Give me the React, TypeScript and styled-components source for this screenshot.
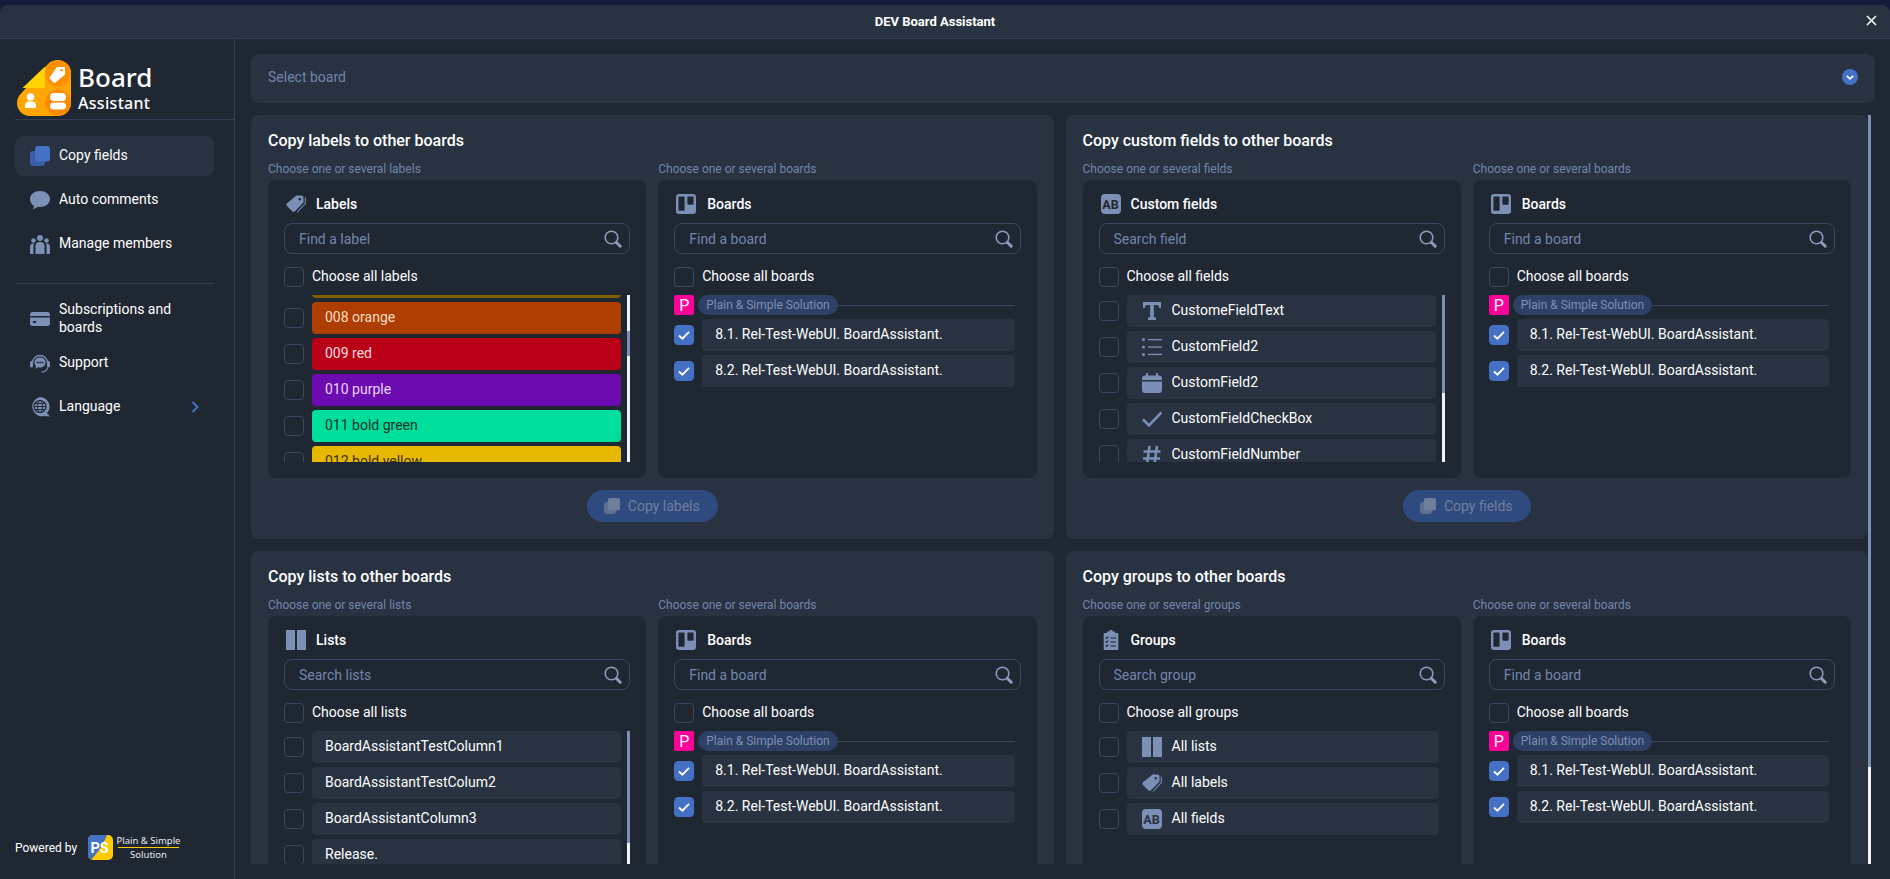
import { useEffect, useRef, type ReactNode } from "react";
import styled, { createGlobalStyle } from "styled-components";

const GlobalStyle = createGlobalStyle`
  * { box-sizing: border-box; }
  html, body { height: 100%; }
  body {
    margin: 0;
    overflow: hidden;
    background: #151b38;
    font-family: Roboto, "Liberation Sans", sans-serif;
    color: #fff;
  }
`;

const Modal = styled.div`
  margin-top: 5px;
  height: 874px;
  display: flex;
  flex-direction: column;
  background: #1f2733;
  border-radius: 8px 8px 0 0;
  overflow: hidden;
`;

const TopBar = styled.header`
  position: relative;
  height: 34px;
  flex: none;
  display: flex;
  align-items: center;
  justify-content: center;
  padding-right: 20px;
  background: #283241;
  border-bottom: 1px solid #323f57;
  font-size: 13px;
  font-weight: 700;
`;

const CloseButton = styled.span`
  position: absolute;
  right: 13px;
  top: 10px;
  display: flex;
  color: #fff;
`;

const Body = styled.div`
  flex: 1;
  min-height: 0;
  display: flex;
`;

const Sidebar = styled.aside`
  width: 235px;
  flex: none;
  display: flex;
  flex-direction: column;
  padding-left: 15px;
  border-right: 1px solid #323f57;
`;

const LogoRow = styled.div`
  height: 81px;
  flex: none;
  display: flex;
  align-items: flex-start;
  gap: 7px;
  padding: 21px 0 0 2px;
  border-bottom: 1px solid #323f57;
`;

const LogoText = styled.div`
  display: flex;
  flex-direction: column;
  font-family: "Noto Sans", sans-serif;
  font-weight: 500;
  padding-top: 2px;
`;

const LogoBoard = styled.span`
  font-size: 26px;
  line-height: 31px;
`;

const LogoAssistant = styled.span`
  font-size: 16px;
  line-height: 20px;
  letter-spacing: 0.3px;
`;

const NavList = styled.nav<{ $top: number }>`
  width: 199px;
  display: flex;
  flex-direction: column;
  gap: 4px;
  padding-top: ${(p) => p.$top}px;
`;

const NavItem = styled.div<{ $active?: boolean }>`
  height: 40px;
  display: flex;
  align-items: center;
  gap: 9px;
  padding: 0 15px;
  border-radius: 8px;
  font-size: 14px;
  line-height: 18px;
  background: ${(p) => (p.$active ? "#283241" : "transparent")};
  color: #fff;
`;

const NavIcon = styled.span`
  width: 20px;
  height: 20px;
  flex: none;
  display: flex;
  color: #7c8fb5;
`;

const NavLabel = styled.span`
  flex: 1;
  padding-bottom: 2px;
`;

const Chevron = styled.span`
  display: flex;
  color: #4471c4;
`;

const NavDivider = styled.div`
  width: 199px;
  height: 1px;
  margin: 19px 0 15px;
  background: #323f57;
  flex: none;
`;

const PoweredBy = styled.div`
  margin-top: auto;
  height: 25px;
  margin-bottom: 19px;
  display: flex;
  align-items: center;
  font-size: 12px;
`;

const PoweredText = styled.span`
  width: 73px;
`;

const CompanyName = styled.div`
  margin-left: 5px;
  width: 61px;
  display: flex;
  flex-direction: column;
  align-items: center;
  font-family: "Noto Sans", sans-serif;
  font-size: 9.5px;
  line-height: 11px;
  color: #e8ebf0;
  white-space: nowrap;
`;

const CompanyRule = styled.span`
  width: 100%;
  height: 1px;
  margin: 1px 0;
  background: #ffcc00;
`;

const Main = styled.main`
  flex: 1;
  min-width: 0;
  display: flex;
  flex-direction: column;
  gap: 12px;
  padding: 15px 15px 15px 16px;
`;

const BoardSelect = styled.div`
  height: 49px;
  flex: none;
  display: flex;
  align-items: center;
  justify-content: space-between;
  padding: 0 17px 4px 17px;
  border-radius: 8px;
  background: #283241;
  font-size: 14px;
  color: #7286ab;
`;

const SelectArrow = styled.span`
  display: flex;
  margin-top: 1px;
`;

/* headless page hides native scrollbars, so the bars are their own elements */
const ScrollFrame = styled.div`
  flex: 1;
  min-height: 0;
  margin-right: 4px;
  display: flex;
`;

const ScrollBody = styled.div`
  flex: 1;
  min-width: 0;
  overflow: hidden;
`;

const Track = styled.div`
  width: 3px;
  flex: none;
  background: #f1f3f8;
`;

const Thumb = styled.div<{ $top: number; $height: number }>`
  margin-top: ${(p) => p.$top}px;
  height: ${(p) => p.$height}px;
  background: #7c8fb5;
`;

const CardGrid = styled.div`
  display: grid;
  grid-template-columns: 1fr 1fr;
  gap: 12px;
`;

const Card = styled.section`
  height: 424px;
  min-width: 0;
  padding: 16px 17px 17px;
  border-radius: 8px;
  background: #283241;
`;

const CardTitle = styled.h2`
  margin: 0 0 11px;
  font-size: 16px;
  line-height: 20px;
  font-weight: 500;
`;

const Columns = styled.div`
  display: grid;
  grid-template-columns: 1fr 1fr;
  gap: 12px;
`;

const Column = styled.div`
  min-width: 0;
`;

const Hint = styled.div`
  height: 14px;
  margin-bottom: 4px;
  font-size: 12px;
  line-height: 14px;
  color: #7286ab;
`;

const Panel = styled.div`
  height: 298px;
  padding: 14px 16px 16px;
  border-radius: 8px;
  background: #1f2733;
`;

const PanelHead = styled.div<{ $gap: number }>`
  height: 20px;
  display: flex;
  align-items: center;
  gap: ${(p) => p.$gap}px;
  padding-left: 2px;
  font-size: 14px;
  font-weight: 500;
  color: #fff;
`;

const PanelHeadText = styled.span`
  padding-bottom: 1px;
`;

const HeadIcon = styled.span`
  width: 20px;
  height: 20px;
  flex: none;
  display: flex;
  color: #7c8fb5;
`;

const AbBadge = styled.span<{ $fg: string }>`
  width: 20px;
  height: 20px;
  flex: none;
  display: flex;
  align-items: center;
  justify-content: center;
  border-radius: 4px;
  background: #7c8fb5;
  color: ${(p) => p.$fg};
  font-size: 12.5px;
  font-weight: 700;
`;

const SearchBox = styled.div`
  height: 31px;
  margin-top: 9px;
  display: flex;
  align-items: center;
  justify-content: space-between;
  padding: 0 7px 0 14px;
  border: 1px solid #3a4762;
  border-radius: 8px;
  font-size: 14px;
  color: #7286ab;
`;

const SearchIcon = styled.span`
  display: flex;
  color: #8c9cbd;
`;

const CheckAll = styled.div`
  height: 20px;
  margin-top: 13px;
  display: flex;
  align-items: center;
  gap: 8px;
  font-size: 14px;
`;

const CheckAllText = styled.span`
  padding-bottom: 2px;
`;

const Box = styled.span<{ $checked?: boolean }>`
  width: 20px;
  height: 20px;
  flex: none;
  display: flex;
  align-items: center;
  justify-content: center;
  border-radius: 4px;
  border: 1px solid ${(p) => (p.$checked ? "#4471c4" : "#3a4762")};
  background: ${(p) => (p.$checked ? "#4471c4" : "transparent")};
  color: #fff;
`;

const ListFrame = styled.div`
  height: 167px;
  margin-top: 8px;
  display: flex;
`;

const RowList = styled.div`
  flex: 1;
  min-width: 0;
  padding-right: 6px;
  display: flex;
  flex-direction: column;
  gap: 4px;
  overflow: hidden;
`;

const Row = styled.div`
  height: 32px;
  flex: none;
  display: flex;
  align-items: center;
  gap: 8px;
`;

const RowBody = styled.div<{ $bg?: string; $fg?: string; $iconed?: boolean }>`
  flex: 1;
  min-width: 0;
  height: 32px;
  display: flex;
  align-items: center;
  gap: 10px;
  padding: 0 ${(p) => (p.$iconed ? 15 : 13)}px 2px;
  border-radius: 4px;
  background: ${(p) => p.$bg ?? "#283241"};
  color: ${(p) => p.$fg ?? "#fff"};
  font-size: 14px;
  white-space: nowrap;
`;

const RowIcon = styled.span`
  width: 20px;
  height: 20px;
  flex: none;
  display: flex;
  margin-top: 2px;
  color: #7c8fb5;
`;

const OrgRow = styled.div`
  height: 20px;
  flex: none;
  display: flex;
  align-items: center;
  gap: 4px;
`;

const OrgBadge = styled.span`
  width: 20px;
  height: 20px;
  flex: none;
  display: flex;
  align-items: center;
  justify-content: center;
  border-radius: 2px;
  background: #ff0099;
  font-size: 16px;
`;

const OrgPill = styled.span`
  height: 20px;
  display: flex;
  align-items: center;
  padding: 0 8px;
  border-radius: 10px;
  background: #2f4066;
  color: #7c8fb5;
  font-size: 12px;
  white-space: nowrap;
`;

const OrgLine = styled.span`
  flex: 1;
  height: 1px;
  margin-left: -4px;
  background: #3a4762;
`;

const CardFoot = styled.div`
  margin-top: 12px;
  display: flex;
  justify-content: center;
`;

const CopyButton = styled.button`
  height: 32px;
  display: flex;
  align-items: center;
  gap: 8px;
  padding: 0 18px 0 17px;
  border: 0;
  border-radius: 16px;
  background: #2f4a7f;
  color: #6f7f9b;
  font-family: inherit;
  font-size: 14px;
`;

/* ---------- drawings ---------- */

const IconClose = () => (
  <svg width="11" height="11" viewBox="0 0 11 11" fill="none" stroke="currentColor" strokeWidth="1.5">
    <path d="M1 1l9 9M10 1l-9 9" />
  </svg>
);

const IconCopy = ({ size, front, back }: { size: number; front: string; back: string }) => (
  <svg width={size} height={size} viewBox="0 0 20 20">
    <rect x="0" y="5" width="15" height="15" rx="3" fill={back} />
    <rect x="5" y="0" width="15" height="15.500" rx="2.500" fill={front} />
  </svg>
);

const IconComment = () => (
  <svg width="20" height="20" viewBox="0 0 20 20" fill="currentColor">
    <path d="M10 1c5.500 0 10 3.300 10 8s-4.500 8-10 8c-.8 0-1.600-.1-2.400-.2C6.400 18 4.800 18.900 2.600 19.200c.8-.9 1.300-2 1.400-3.200C1.600 14.500 0 12 0 9c0-4.700 4.500-8 10-8z" />
  </svg>
);

const IconMembers = () => (
  <svg width="20" height="20" viewBox="0 0 20 20" fill="currentColor">
    <circle cx="10" cy="4" r="3" />
    <circle cx="3.500" cy="6.500" r="2.300" />
    <circle cx="16.500" cy="6.500" r="2.300" />
    <path d="M5.500 20v-8c0-2.200 1.500-4 3.500-4h2c2 0 3.500 1.800 3.500 4v8z" />
    <path d="M0 20v-7c0-2 1.200-3.500 3-3.500h1.300c-.5.800-.8 1.700-.8 2.700V20zM20 20v-7c0-2-1.200-3.500-3-3.500h-1.300c.5.800.8 1.700.8 2.700V20z" />
  </svg>
);

const IconCard = () => (
  <svg width="20" height="20" viewBox="0 0 20 20" fill="currentColor">
    <path d="M0 7V5.500C0 4.100 1.100 3 2.500 3h15C18.900 3 20 4.100 20 5.500V7z" />
    <path fillRule="evenodd" d="M0 8.500h20v6c0 1.400-1.100 2.500-2.500 2.500h-15C1.100 17 0 15.900 0 14.500zM3 12v2h3v-2z" />
  </svg>
);

const IconSupport = () => (
  <svg width="20" height="20" viewBox="0 0 20 20" fill="none">
    <path d="M2.500 10a7.500 7.500 0 0 1 15 0" stroke="currentColor" strokeWidth="1.300" />
    <rect x="0" y="8" width="3" height="6.500" rx="1.500" fill="currentColor" />
    <rect x="17" y="8" width="3" height="6.500" rx="1.500" fill="currentColor" />
    <path d="M10 4.500c3.300 0 5.500 2.200 5.500 5s-2.200 5-5.500 5c-.7 0-1.300-.1-1.900-.3L5.500 16l.6-2.900C5 12.100 4.500 10.900 4.500 9.500c0-2.800 2.200-5 5.500-5z" fill="currentColor" />
    <circle cx="7.500" cy="9.500" r="1" fill="#1f2733" />
    <circle cx="10" cy="9.500" r="1" fill="#1f2733" />
    <circle cx="12.500" cy="9.500" r="1" fill="#1f2733" />
    <path d="M17.500 14.500c-.5 3-3 4.500-6 4.500" stroke="currentColor" strokeWidth="1.300" />
  </svg>
);

const IconGlobe = () => (
  <svg width="20" height="20" viewBox="0 0 20 20" fill="none">
    <path d="M10 0a9.500 9.500 0 0 1 9.500 9.500c0 2.600-1 4.900-2.700 6.600L20 19.500l-6-.5a9.500 9.500 0 1 1-4-19z" fill="currentColor" />
    <circle cx="10" cy="9.500" r="6" stroke="#1f2733" strokeWidth="1.200" />
    <ellipse cx="10" cy="9.500" rx="2.500" ry="6" stroke="#1f2733" strokeWidth="1" />
    <path d="M4 9.500h12M5 6.500h10M5 12.500h10" stroke="#1f2733" strokeWidth="1" />
  </svg>
);

const IconChevronRight = () => (
  <svg width="8" height="12" viewBox="0 0 8 12" fill="none" stroke="currentColor" strokeWidth="2">
    <path d="M1.500 1l5 5-5 5" />
  </svg>
);

const IconSelectArrow = () => (
  <svg width="16" height="16" viewBox="0 0 16 16">
    <circle cx="8" cy="8" r="8" fill="#4471c4" />
    <path d="M4.800 6.800L8 9.800l3.200-3" fill="none" stroke="#fff" strokeWidth="1.600" />
  </svg>
);

const IconSearch = () => (
  <svg width="18" height="18" viewBox="0 0 18 18" fill="none" stroke="currentColor">
    <circle cx="7.500" cy="7.500" r="6.300" strokeWidth="1.600" />
    <path d="M12.500 12.500l3.700 3.700" strokeWidth="3" strokeLinecap="round" />
  </svg>
);

const IconCheck = () => (
  <svg width="14" height="14" viewBox="0 0 14 14" fill="none" stroke="currentColor" strokeWidth="1.800">
    <path d="M2 7.500l3.400 3.200L12 3.800" />
  </svg>
);

const IconTag = () => (
  <svg width="20" height="20" viewBox="0 0 20 20" fill="none">
    <path
      fillRule="evenodd"
      fill="currentColor"
      d="M10.500 1.500h5a2 2 0 0 1 2 2v5L9 17.300a2 2 0 0 1-2.800 0L1 12a2 2 0 0 1 0-2.800zM13.800 4a1.300 1.300 0 1 0 0 2.600 1.300 1.300 0 0 0 0-2.600z"
    />
    <path d="M19.300 3.500V9.500L11 18.500" stroke="currentColor" strokeWidth="1.100" />
  </svg>
);

const IconBoard = () => (
  <svg width="20" height="20" viewBox="0 0 20 20" fill="currentColor">
    <path
      fillRule="evenodd"
      d="M3 0h14a3 3 0 0 1 3 3v14a3 3 0 0 1-3 3H3a3 3 0 0 1-3-3V3a3 3 0 0 1 3-3zm0 2.500a.7.7 0 0 0-.6.6v13c0 .3.300.6.600.6h5c.3 0 .6-.3.6-.6v-13a.7.7 0 0 0-.6-.6zm9 0a.7.7 0 0 0-.6.6v7c0 .3.300.6.600.6h5c.3 0 .6-.3.6-.6v-7a.7.7 0 0 0-.6-.6z"
    />
  </svg>
);

const IconLists = () => (
  <svg width="20" height="20" viewBox="0 0 20 20" fill="currentColor">
    <rect x="0" y="0" width="9" height="20" />
    <rect x="11" y="0" width="9" height="20" />
  </svg>
);

const IconGroups = () => (
  <svg width="20" height="20" viewBox="0 0 20 20">
    <path
      fill="currentColor"
      d="M8.500 0h3v1.500h2.500v1.500h2.500a.8.800 0 0 1 .8.800v15.400a.8.800 0 0 1-.8.800h-13a.8.800 0 0 1-.8-.8V3.800a.8.800 0 0 1 .8-.8H6V1.500h2.500z"
    />
    <path
      fill="none"
      stroke="#1f2733"
      strokeWidth="1.100"
      d="M4.700 7.500l1 1 1.700-2M4.700 11.500l1 1 1.700-2M4.700 15.500l1 1 1.700-2M9.500 8h5.500M9.500 12h5.500M9.500 16h5.500"
    />
  </svg>
);

const IconFieldText = () => (
  <svg width="20" height="20" viewBox="0 0 20 20" fill="currentColor">
    <path d="M1 1h18v6h-1.700c-.3-2-1-3-3-3H11.800v12l2.200.8V19H6v-2.200l2.200-.8V4H5.700c-2 0-2.700 1-3 3H1z" />
  </svg>
);

const IconFieldList = () => (
  <svg width="20" height="20" viewBox="0 0 20 20" fill="currentColor">
    <circle cx="1.500" cy="2.500" r="1.500" />
    <circle cx="1.500" cy="10" r="1.500" />
    <circle cx="1.500" cy="17.500" r="1.500" />
    <rect x="6" y="2" width="14" height="1.300" />
    <rect x="6" y="9.400" width="14" height="1.300" />
    <rect x="6" y="16.800" width="14" height="1.300" />
  </svg>
);

const IconFieldDate = () => (
  <svg width="20" height="20" viewBox="0 0 20 20" fill="currentColor">
    <rect x="4" y="0" width="2" height="4" />
    <rect x="14" y="0" width="2" height="4" />
    <path d="M3 2.500h14a3 3 0 0 1 3 3V7H0V5.500a3 3 0 0 1 3-3z" />
    <path d="M0 8.500h20V17a3 3 0 0 1-3 3H3a3 3 0 0 1-3-3z" />
  </svg>
);

const IconFieldCheck = () => (
  <svg width="20" height="20" viewBox="0 0 20 20" fill="none" stroke="currentColor" strokeWidth="2.600">
    <path d="M1 10.500l6 6L19.500 3.500" />
  </svg>
);

const IconFieldNumber = () => (
  <svg width="20" height="20" viewBox="0 0 20 20" fill="none" stroke="currentColor" strokeWidth="2.600">
    <path d="M7.500 1L5 19M15 1l-2.500 18M1.500 6.500h17M1 13.500h17" />
  </svg>
);

const Logo = () => (
  <svg width="54" height="56" viewBox="0 0 54 56">
    <path
      fill="#ffa600"
      d="M41 0a13 13 0 0 1 13 13v30a13 13 0 0 1-13 13H13A13 13 0 0 1 0 43c0-4 1.500-7 4-9.500L31 4c3-3 6-4 10-4z"
    />
    <path fill="#ffd400" d="M28 6.500V28H5.500z" />
    <circle cx="41" cy="13.500" r="13" fill="#ff9000" />
    <circle cx="41" cy="42.500" r="13" fill="#ff8a00" />
    <path
      fill="#fff"
      fillRule="evenodd"
      d="M40 7h8v7.500L38.500 22.500a1.500 1.500 0 0 1-2 0L33 19a1.500 1.500 0 0 1 0-2zM44.500 9a1.300 1.300 0 1 0 0 2.600 1.300 1.300 0 0 0 0-2.600z"
    />
    <rect x="33" y="33" width="16" height="8" rx="4" fill="#fff" />
    <rect x="33" y="42.500" width="16" height="7" rx="3.500" fill="#fff" />
    <circle cx="13.500" cy="37" r="3.800" fill="#fff" />
    <path fill="#fff" d="M8 48v-2.500c0-2.500 1.700-4 3.500-4h4c1.800 0 3.500 1.500 3.500 4V48z" />
  </svg>
);

const PsLogo = () => (
  <svg width="25" height="25" viewBox="0 0 25 25">
    <rect width="25" height="25" rx="5" fill="#ffcc00" />
    <path fill="#4471c4" d="M5 0h14C16 8 10 18 3 24.500 1.200 24 0 22 0 20V5a5 5 0 0 1 5-5z" />
    <text x="2.500" y="18" fill="#fff" fontFamily="Roboto, sans-serif" fontWeight="700" fontSize="14.500">
      PS
    </text>
  </svg>
);

/* ---------- data ---------- */

// the first row only shows its bottom edge above the scrolled list
const labels = [
  { name: "", bg: "#7f5f01", fg: "#fff" },
  { name: "008 orange", bg: "#ae3e00", fg: "#f9dcc6" },
  { name: "009 red", bg: "#ba0016", fg: "#fdd8dc" },
  { name: "010 purple", bg: "#6c0bb0", fg: "#ead6fb" },
  { name: "011 bold green", bg: "#00de9c", fg: "#14312a" },
  { name: "012 bold yellow", bg: "#e6b800", fg: "#3c3103" },
];

const fields: { name: string; icon: ReactNode }[] = [
  { name: "CustomeFieldText", icon: <IconFieldText /> },
  { name: "CustomField2", icon: <IconFieldList /> },
  { name: "CustomField2", icon: <IconFieldDate /> },
  { name: "CustomFieldCheckBox", icon: <IconFieldCheck /> },
  { name: "CustomFieldNumber", icon: <IconFieldNumber /> },
];

const lists = ["BoardAssistantTestColumn1", "BoardAssistantTestColum2", "BoardAssistantColumn3", "Release."];

const groups: { name: string; icon: ReactNode }[] = [
  { name: "All lists", icon: <IconLists /> },
  { name: "All labels", icon: <IconTag /> },
  { name: "All fields", icon: <AbBadge $fg="#283241">AB</AbBadge> },
];

/* ---------- parts ---------- */

const BoardsColumn = () => (
  <Column>
    <Hint>Choose one or several boards</Hint>
    <Panel>
      <PanelHead $gap={11}>
        <HeadIcon>
          <IconBoard />
        </HeadIcon>
        <PanelHeadText>Boards</PanelHeadText>
      </PanelHead>
      <SearchBox>
        Find a board
        <SearchIcon>
          <IconSearch />
        </SearchIcon>
      </SearchBox>
      <CheckAll>
        <Box />
        <CheckAllText>Choose all boards</CheckAllText>
      </CheckAll>
      <ListFrame>
        <RowList>
          <OrgRow>
            <OrgBadge>P</OrgBadge>
            <OrgPill>Plain &amp; Simple Solution</OrgPill>
            <OrgLine />
          </OrgRow>
          {["8.1", "8.2"].map((n) => (
            <Row key={n}>
              <Box $checked>
                <IconCheck />
              </Box>
              <RowBody>{n}. Rel-Test-WebUI. BoardAssistant.</RowBody>
            </Row>
          ))}
        </RowList>
      </ListFrame>
    </Panel>
  </Column>
);

interface SourceColumnProps {
  hint: string;
  icon: ReactNode;
  title: string;
  placeholder: string;
  chooseAll: string;
  children: ReactNode;
}

const SourceColumn = ({ hint, icon, title, placeholder, chooseAll, children }: SourceColumnProps) => (
  <Column>
    <Hint>{hint}</Hint>
    <Panel>
      <PanelHead $gap={10}>
        <HeadIcon>{icon}</HeadIcon>
        <PanelHeadText>{title}</PanelHeadText>
      </PanelHead>
      <SearchBox>
        {placeholder}
        <SearchIcon>
          <IconSearch />
        </SearchIcon>
      </SearchBox>
      <CheckAll>
        <Box />
        <CheckAllText>{chooseAll}</CheckAllText>
      </CheckAll>
      <ListFrame>{children}</ListFrame>
    </Panel>
  </Column>
);

interface CopyCardProps {
  title: string;
  button: string;
  children: ReactNode;
}

const CopyCard = ({ title, button, children }: CopyCardProps) => (
  <Card>
    <CardTitle>{title}</CardTitle>
    <Columns>
      {children}
      <BoardsColumn />
    </Columns>
    <CardFoot>
      <CopyButton>
        <IconCopy size={16} front="#6f7f9b" back="#5f6f8d" />
        {button}
      </CopyButton>
    </CardFoot>
  </Card>
);

const App = () => {
  const labelsRef = useRef<HTMLDivElement>(null);

  useEffect(() => {
    if (labelsRef.current) labelsRef.current.scrollTop = 29;
  }, []);

  return (
    <>
      <GlobalStyle />
      <Modal>
        <TopBar>
          DEV Board Assistant
          <CloseButton>
            <IconClose />
          </CloseButton>
        </TopBar>
        <Body>
          <Sidebar>
            <LogoRow>
              <Logo />
              <LogoText>
                <LogoBoard>Board</LogoBoard>
                <LogoAssistant>Assistant</LogoAssistant>
              </LogoText>
            </LogoRow>
            <NavList $top={16}>
              <NavItem $active>
                <NavIcon>
                  <IconCopy size={20} front="#4471c4" back="#3a5ea8" />
                </NavIcon>
                <NavLabel>Copy fields</NavLabel>
              </NavItem>
              <NavItem>
                <NavIcon>
                  <IconComment />
                </NavIcon>
                <NavLabel>Auto comments</NavLabel>
              </NavItem>
              <NavItem>
                <NavIcon>
                  <IconMembers />
                </NavIcon>
                <NavLabel>Manage members</NavLabel>
              </NavItem>
            </NavList>
            <NavDivider />
            <NavList $top={0}>
              <NavItem>
                <NavIcon>
                  <IconCard />
                </NavIcon>
                <NavLabel>Subscriptions and boards</NavLabel>
              </NavItem>
              <NavItem>
                <NavIcon>
                  <IconSupport />
                </NavIcon>
                <NavLabel>Support</NavLabel>
              </NavItem>
              <NavItem>
                <NavIcon>
                  <IconGlobe />
                </NavIcon>
                <NavLabel>Language</NavLabel>
                <Chevron>
                  <IconChevronRight />
                </Chevron>
              </NavItem>
            </NavList>
            <PoweredBy>
              <PoweredText>Powered by</PoweredText>
              <PsLogo />
              <CompanyName>
                Plain &amp; Simple
                <CompanyRule />
                Solution
              </CompanyName>
            </PoweredBy>
          </Sidebar>
          <Main>
            <BoardSelect>
              Select board
              <SelectArrow>
                <IconSelectArrow />
              </SelectArrow>
            </BoardSelect>
            <ScrollFrame>
              <ScrollBody>
                <CardGrid>
                  <CopyCard title="Copy labels to other boards" button="Copy labels">
                    <SourceColumn
                      hint="Choose one or several labels"
                      icon={<IconTag />}
                      title="Labels"
                      placeholder="Find a label"
                      chooseAll="Choose all labels"
                    >
                      <RowList ref={labelsRef}>
                        {labels.map((l) => (
                          <Row key={l.bg}>
                            <Box />
                            <RowBody $bg={l.bg} $fg={l.fg}>
                              {l.name}
                            </RowBody>
                          </Row>
                        ))}
                      </RowList>
                      <Track>
                        <Thumb $top={36} $height={25} />
                      </Track>
                    </SourceColumn>
                  </CopyCard>
                  <CopyCard title="Copy custom fields to other boards" button="Copy fields">
                    <SourceColumn
                      hint="Choose one or several fields"
                      icon={<AbBadge $fg="#1f2733">AB</AbBadge>}
                      title="Custom fields"
                      placeholder="Search field"
                      chooseAll="Choose all fields"
                    >
                      <RowList>
                        {fields.map((f, i) => (
                          <Row key={i}>
                            <Box />
                            <RowBody $iconed>
                              <RowIcon>{f.icon}</RowIcon>
                              {f.name}
                            </RowBody>
                          </Row>
                        ))}
                      </RowList>
                      <Track>
                        <Thumb $top={0} $height={98} />
                      </Track>
                    </SourceColumn>
                  </CopyCard>
                  <CopyCard title="Copy lists to other boards" button="Copy lists">
                    <SourceColumn
                      hint="Choose one or several lists"
                      icon={<IconLists />}
                      title="Lists"
                      placeholder="Search lists"
                      chooseAll="Choose all lists"
                    >
                      <RowList>
                        {lists.map((name) => (
                          <Row key={name}>
                            <Box />
                            <RowBody>{name}</RowBody>
                          </Row>
                        ))}
                      </RowList>
                      <Track>
                        <Thumb $top={0} $height={112} />
                      </Track>
                    </SourceColumn>
                  </CopyCard>
                  <CopyCard title="Copy groups to other boards" button="Copy groups">
                    <SourceColumn
                      hint="Choose one or several groups"
                      icon={<IconGroups />}
                      title="Groups"
                      placeholder="Search group"
                      chooseAll="Choose all groups"
                    >
                      <RowList>
                        {groups.map((g) => (
                          <Row key={g.name}>
                            <Box />
                            <RowBody $iconed>
                              <RowIcon>{g.icon}</RowIcon>
                              {g.name}
                            </RowBody>
                          </Row>
                        ))}
                      </RowList>
                    </SourceColumn>
                  </CopyCard>
                </CardGrid>
              </ScrollBody>
              <Track>
                <Thumb $top={0} $height={652} />
              </Track>
            </ScrollFrame>
          </Main>
        </Body>
      </Modal>
    </>
  );
};

export default App;
